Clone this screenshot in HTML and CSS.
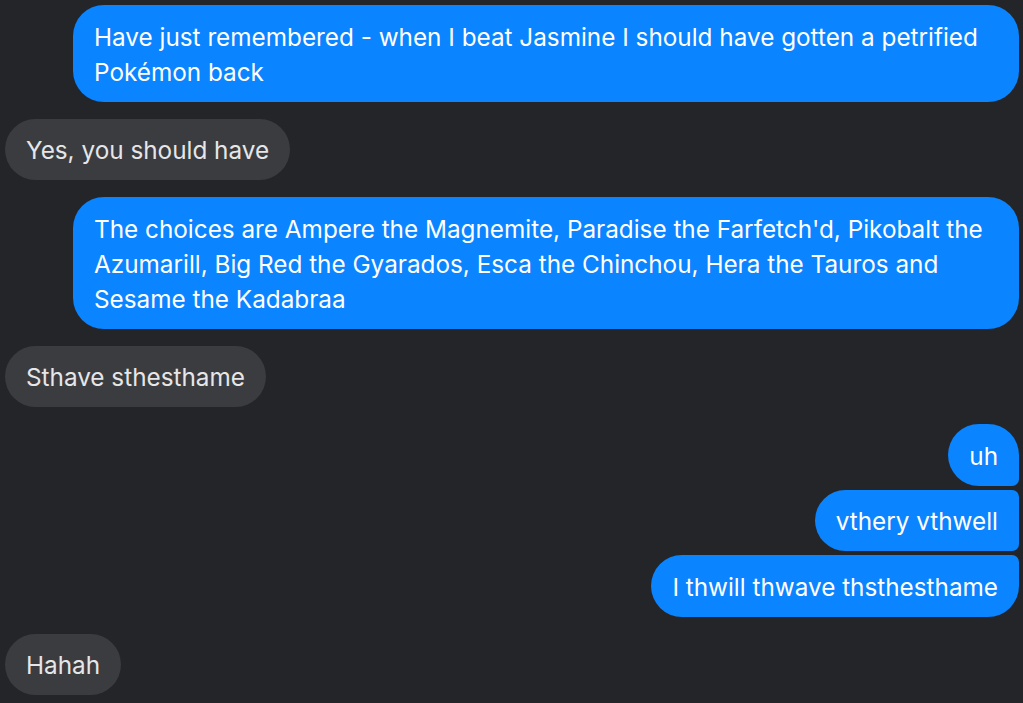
FILE: index.html
```html
<!DOCTYPE html>
<html>
<head>
<meta charset="utf-8">
<link rel="stylesheet" href="styles.css">
</head>
<body>
<div class="chat">
  <div class="group out">
    <div class="bubble">Have just remembered - when I beat Jasmine I should have gotten a petrified Pokémon back</div>
  </div>
  <div class="group in">
    <div class="bubble">Yes, you should have</div>
  </div>
  <div class="group out">
    <div class="bubble">The choices are Ampere the Magnemite, Paradise the Farfetch'd, Pikobalt the Azumarill, Big Red the Gyarados, Esca the Chinchou, Hera the Tauros and Sesame the Kadabraa</div>
  </div>
  <div class="group in">
    <div class="bubble">Sthave sthesthame</div>
  </div>
  <div class="group out">
    <div class="bubble">uh</div>
    <div class="bubble">vthery vthwell</div>
    <div class="bubble">I thwill thwave thsthesthame</div>
  </div>
  <div class="group in">
    <div class="bubble">Hahah</div>
  </div>
</div>
</body>
</html>
```
FILE: styles.css
```css
html, body {
  margin: 0;
  padding: 0;
  background: #242528;
}
body {
  font-family: "Inter", "Noto Sans", sans-serif;
  font-size: 24.3px;
  line-height: 35px;
  color: #fff;
  height: 703px;
  overflow: hidden;
}
.chat {
  display: flex;
  flex-direction: column;
  gap: 17px;
  padding: 5px 4px 0 5px;
}
.group {
  display: flex;
  flex-direction: column;
  gap: 4px;
}
.group.out { align-items: flex-end; }
.group.in { align-items: flex-start; }
.bubble {
  padding: 14.5px 21px 12px 21px;
  border-radius: 31px;
  max-width: 904px;
}
.out .bubble {
  background: #0a84ff;
  color: #fff;
}
.in .bubble {
  background: #3b3c3f;
  color: #e6e6e8;
}
.out .bubble:not(:last-child) {
  border-bottom-right-radius: 7px;
}
.out .bubble:not(:first-child) {
  border-top-right-radius: 7px;
}
```
